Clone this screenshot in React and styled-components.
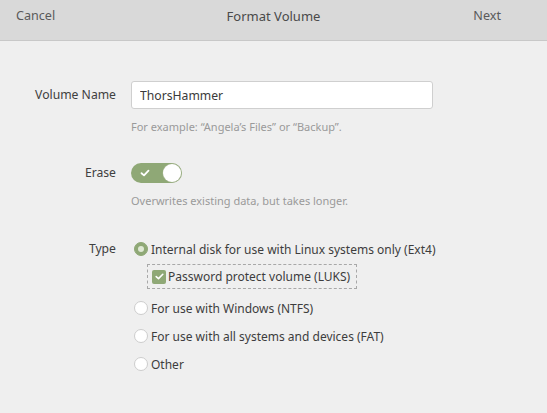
import React from "react"
import styled, { createGlobalStyle } from "styled-components"

const GlobalStyle = createGlobalStyle`
  html, body {
    margin: 0;
    padding: 0;
    background: #efefef;
  }
  body {
    font-family: "Noto Sans", "Open Sans", sans-serif;
    font-size: 12px;
    color: #3d3d3d;
  }
`

const App = () => {
  return (
    <>
      <GlobalStyle />
      <Window>
        <HeaderBar>
          <HeaderButton>Cancel</HeaderButton>
          <Title>Format Volume</Title>
          <HeaderButton>Next</HeaderButton>
        </HeaderBar>

        <Form>
          <Label offset="5px">Volume Name</Label>
          <Field>
            <TextInput defaultValue="ThorsHammer" />
            <Hint>For example: “Angela’s Files” or “Backup”.</Hint>
          </Field>

          <Label offset="1px">Erase</Label>
          <Field>
            <Switch>
              <svg width="10" height="8" viewBox="0 0 10 8">
                <path d="M1.5 4.2 L4 6.4 L8.5 1.6" fill="none" stroke="#fff" strokeWidth="1.8" strokeLinecap="round" strokeLinejoin="round" />
              </svg>
              <Knob />
            </Switch>
            <Hint>Overwrites existing data, but takes longer.</Hint>
          </Field>

          <Label offset="3px">Type</Label>
          <Options>
            <Option>
              <Radio checked />
              Internal disk for use with Linux systems only (Ext4)
            </Option>
            <CheckRow>
              <CheckBox>
                <svg width="9" height="7" viewBox="0 0 9 7">
                  <path d="M1.2 3.6 L3.5 5.6 L7.8 1.3" fill="none" stroke="#fff" strokeWidth="1.6" strokeLinecap="round" strokeLinejoin="round" />
                </svg>
              </CheckBox>
              Password protect volume (LUKS)
            </CheckRow>
            <Option>
              <Radio />
              For use with Windows (NTFS)
            </Option>
            <Option>
              <Radio />
              For use with all systems and devices (FAT)
            </Option>
            <Option>
              <Radio />
              Other
            </Option>
          </Options>
        </Form>
      </Window>
    </>
  )
}

const Window = styled.div`
  position: relative;
  width: 547px;
  height: 413px;
  background: #efefef;
  overflow: hidden;
`

const HeaderBar = styled.div`
  height: 40px;
  display: flex;
  align-items: center;
  justify-content: space-between;
  padding: 0 46px 0 16px;
  background: #d9d9d9;
  border-bottom: 1px solid #c8c8c8;
  box-sizing: content-box;
  font-size: 12.6px;
`

const HeaderButton = styled.span`
  color: #5a5a5a;
  line-height: 18px;
  margin-top: -8px;
`

const Title = styled.span`
  color: #4a4a4a;
  line-height: 18px;
  margin-top: -8px;
  position: absolute;
  left: 0;
  right: 0;
  text-align: center;
  font-size: 13px;
  pointer-events: none;
`

const Form = styled.div`
  display: grid;
  grid-template-columns: 116px 1fr;
  column-gap: 15px;
  padding-top: 40px;
  align-items: start;
`

const Label = styled.div`
  text-align: right;
  line-height: 18px;
  font-size: 12.2px;
  color: #404040;
  padding-top: ${(p) => p.offset};
`

const Field = styled.div`
  display: flex;
  flex-direction: column;
  align-items: flex-start;
  margin-bottom: 27px;
`

const TextInput = styled.input`
  width: 302px;
  height: 28px;
  box-sizing: border-box;
  border: 1px solid #cfcfcf;
  border-radius: 3px;
  background: #fff;
  padding: 0 8px;
  font-family: inherit;
  font-size: 12.2px;
  color: #3a3a3a;
  outline: none;
`

const Hint = styled.div`
  margin-top: 9px;
  line-height: 18px;
  font-size: 11px;
  color: #9a9a9a;
`

const Switch = styled.div`
  width: 51px;
  height: 20px;
  border-radius: 10px;
  background: #8fa876;
  display: flex;
  align-items: center;
  justify-content: space-between;
  padding: 0 1px 0 9px;
  box-sizing: border-box;
`

const Knob = styled.div`
  width: 18px;
  height: 18px;
  border-radius: 50%;
  background: #fff;
  box-shadow: 0 0 0 0.5px #aab896;
`

const Options = styled.div`
  display: flex;
  flex-direction: column;
  align-items: flex-start;
  margin-top: -2px;
`

const Option = styled.div`
  display: flex;
  align-items: center;
  height: 28px;
  gap: 3px;
  margin-left: 3px;
  color: #3d3d3d;
`

const Radio = styled.span`
  width: 14px;
  height: 14px;
  border-radius: 50%;
  box-sizing: border-box;
  flex: none;
  background: ${(p) => (p.checked ? "#8fa876" : "#fff")};
  border: 1px solid ${(p) => (p.checked ? "#8fa876" : "#cdcdcd")};
  display: flex;
  align-items: center;
  justify-content: center;
  &::after {
    content: "";
    display: ${(p) => (p.checked ? "block" : "none")};
    width: 6px;
    height: 6px;
    border-radius: 50%;
    background: #dfe8d4;
  }
`

const CheckRow = styled.div`
  display: flex;
  align-items: center;
  gap: 2px;
  height: 25px;
  box-sizing: border-box;
  margin: 1px 0 5px 16px;
  padding: 0 6px 0 4px;
  border: 1px dashed #a8a8a8;
  color: #3d3d3d;
`

const CheckBox = styled.span`
  width: 14px;
  height: 14px;
  border-radius: 2px;
  background: #8fa876;
  flex: none;
  display: flex;
  align-items: center;
  justify-content: center;
`

export default App
